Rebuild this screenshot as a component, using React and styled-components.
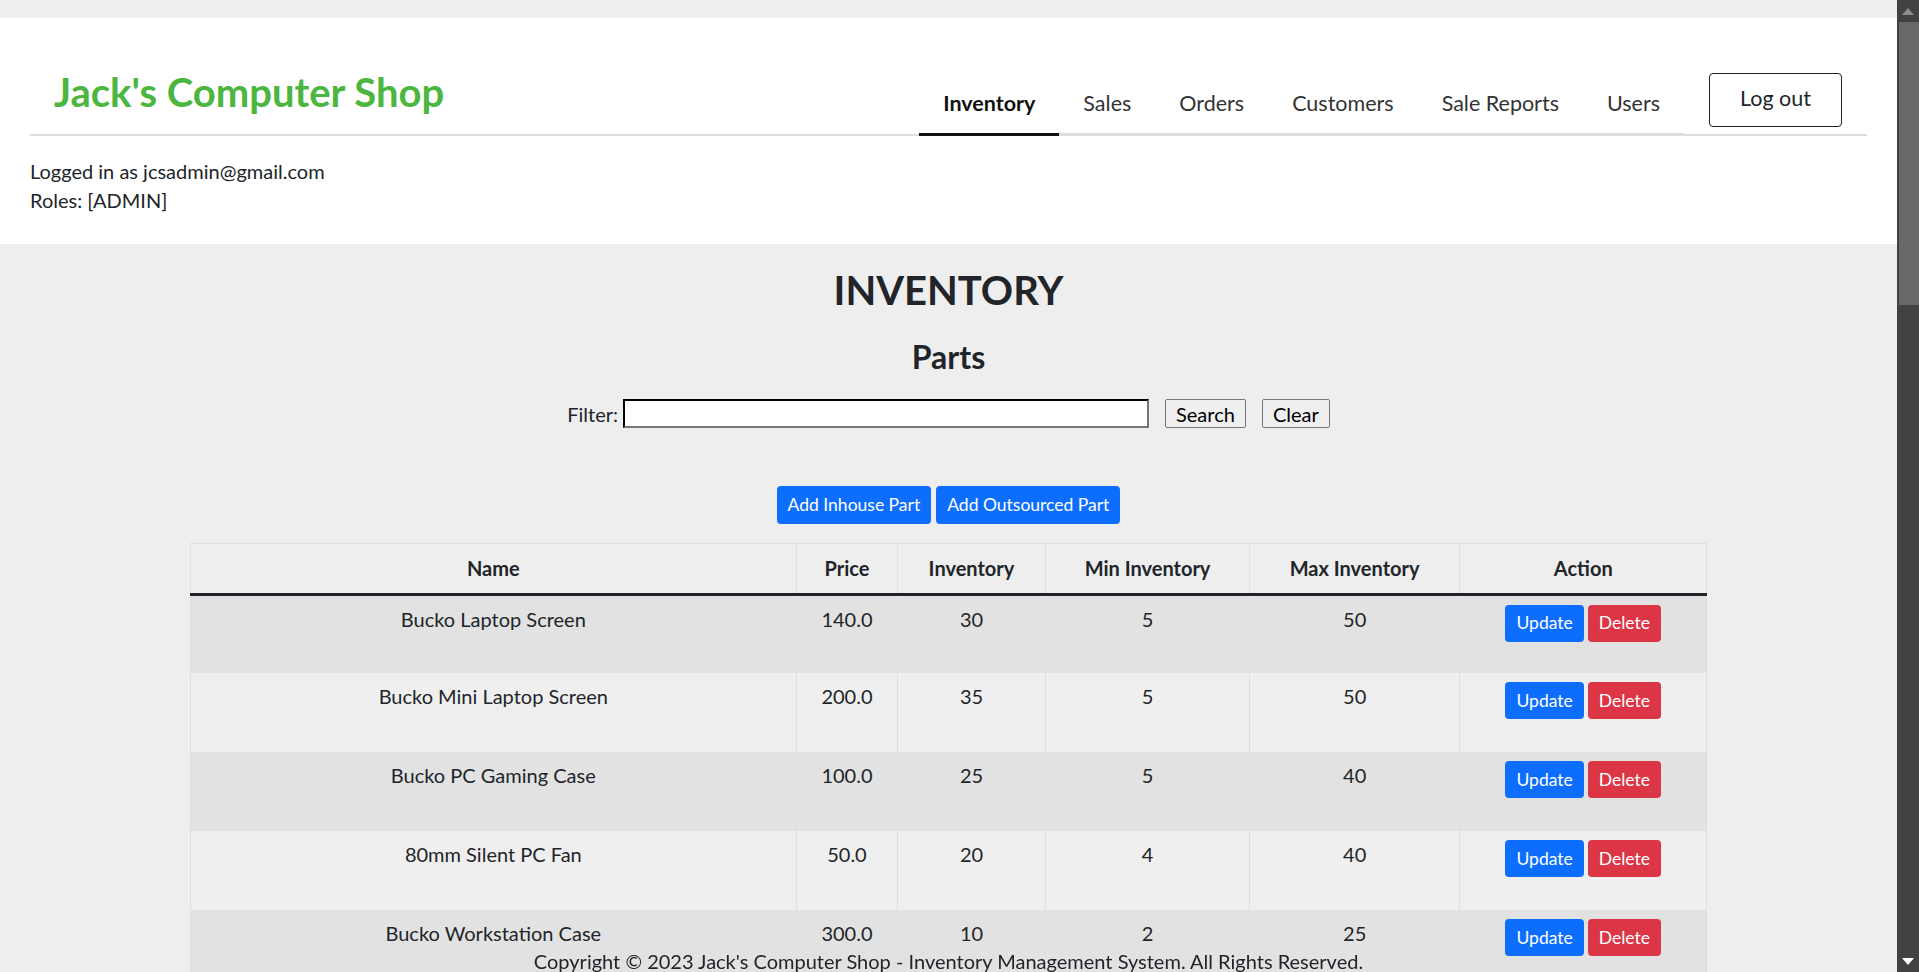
import React from "react";
import styled, { createGlobalStyle } from "styled-components";

const GlobalStyle = createGlobalStyle`
  html { background: #eeeeee; }
  body {
    margin: 0;
    padding-right: 22px;
    background: #eeeeee;
    font-family: Lato, "Open Sans", "Liberation Sans", sans-serif;
    font-size: 20px;
    line-height: 1.5;
    color: #212529;
  }
  * { box-sizing: border-box; }
`;

const Page = styled.div`
  padding-top: 18px;
  padding-bottom: 120px;
`;

const Header = styled.header`
  background: #ffffff;
`;

const HeaderBar = styled.div`
  display: flex;
  align-items: flex-end;
  margin: 0 30px;
  padding-top: 50px;
  border-bottom: 2px solid #dedede;
`;

const Brand = styled.h1`
  margin: 0 auto 18px 0;
  padding-left: 24px;
  font-size: 40px;
  line-height: 48px;
  font-weight: 700;
  color: #4cb640;
`;

const NavList = styled.ul`
  display: flex;
  list-style: none;
  margin: 0 0 -2px 0;
  padding: 0;
  border-bottom: 3px solid #dedede;
`;

const NavItem = styled.li`
  margin-bottom: -3px;
  padding: 9px 24px 14px;
  font-size: 21.5px;
  line-height: 32px;
  color: ${(p) => (p.$active ? "#111111" : "#333333")};
  font-weight: ${(p) => (p.$active ? 700 : 400)};
  border-bottom: 3px solid ${(p) => (p.$active ? "#111111" : "transparent")};
  cursor: pointer;
`;

const LogoutButton = styled.button`
  width: 133px;
  height: 54px;
  margin: 0 25px 7px 25px;
  background: #ffffff;
  border: 1.5px solid #222222;
  border-radius: 4px;
  font-family: inherit;
  font-size: 21.5px;
  color: #212529;
  padding: 0 0 5px;
`;

const UserInfo = styled.div`
  padding: 21px 30px 29px;
  font-size: 20px;
  line-height: 28.8px;
`;

const Main = styled.main`
  display: flex;
  flex-direction: column;
  align-items: center;
`;

const Title = styled.h1`
  margin: 22px 0 0;
  font-size: 40px;
  line-height: 48px;
  font-weight: 700;
`;

const SubTitle = styled.h2`
  margin: ${(p) => p.$mt || 24}px 0 0;
  font-size: 32px;
  line-height: 38px;
  font-weight: 700;
`;

const FilterRow = styled.form`
  display: flex;
  align-items: center;
  margin-top: 23px;
  font-size: 20px;
`;

const FilterLabel = styled.label`
  margin-right: 5px;
`;

const FilterInput = styled.input`
  width: 526px;
  height: 29px;
  border: 2px inset #767676;
  border-top-color: #222;
  border-left-color: #222;
  background: #ffffff;
  margin-right: 16px;
`;

const PlainButton = styled.button`
  height: 29px;
  padding: 0 10px;
  margin-right: 16px;
  background: #efefef;
  border: 1px solid #767676;
  border-radius: 2px;
  font-family: inherit;
  font-size: 20px;
  line-height: 24px;
  color: #000;
  &:last-child { margin-right: 0; }
`;

const ActionsRow = styled.div`
  display: flex;
  gap: 5px;
  margin-top: 57px;
`;

const Btn = styled.button`
  height: ${(p) => (p.$small ? 37 : 38)}px;
  padding: 0 11px;
  border: none;
  border-radius: 4px;
  background: ${(p) => (p.$variant === "danger" ? "#dc3545" : "#0d6efd")};
  color: #ffffff;
  font-family: inherit;
  font-size: 17.5px;
  line-height: 24px;
`;

const Table = styled.table`
  width: 80%;
  margin-top: 19px;
  border-collapse: collapse;
  font-size: 20px;
`;

const Th = styled.th`
  width: ${(p) => p.$w}px;
  height: 51px;
  padding: 10px 8px;
  font-weight: 700;
  line-height: 28.8px;
  text-align: center;
  border: 1px solid #dfdfdf;
  border-bottom: 3px solid #212529;
`;

const Tr = styled.tr`
  background: ${(p) => (p.$odd ? "#e2e2e2" : "#efefef")};
`;

const Td = styled.td`
  height: 79px;
  padding: 9px 8px 10px;
  vertical-align: top;
  text-align: center;
  line-height: 28.8px;
  border-left: 1px solid #dfdfdf;
  border-right: 1px solid #dfdfdf;
`;

const ButtonCell = styled.div`
  display: flex;
  justify-content: center;
  gap: 4px;
`;

const Footer = styled.footer`
  position: fixed;
  left: 0;
  right: 22px;
  bottom: 0;
  text-align: center;
  font-size: 20px;
  line-height: 22px;
`;

/* browser-style vertical scrollbar shown at the right edge of the window */
const ScrollRail = styled.div`
  position: fixed;
  top: 0;
  right: 0;
  width: 22px;
  height: 100vh;
  background: #424242;
  display: flex;
  flex-direction: column;
`;

const ScrollArrow = styled.div`
  height: 22px;
  flex: none;
  display: flex;
  align-items: center;
  justify-content: center;
  margin-top: ${(p) => (p.$bottom ? "auto" : 0)};
`;

const ScrollThumb = styled.div`
  height: 283px;
  margin-left: 2px;
  background: #686868;
  flex: none;
`;

const parts = [
  ["Bucko Laptop Screen", "140.0", 30, 5, 50],
  ["Bucko Mini Laptop Screen", "200.0", 35, 5, 50],
  ["Bucko PC Gaming Case", "100.0", 25, 5, 40],
  ["80mm Silent PC Fan", "50.0", 20, 4, 40],
  ["Bucko Workstation Case", "300.0", 10, 2, 25],
  ["Bucko 650W Power Supply", "90.0", 15, 3, 30],
  ["Bucko DDR4 16GB RAM", "75.0", 40, 5, 60],
  ["Bucko 1TB NVMe SSD", "120.0", 22, 4, 40],
  ["Bucko ATX Motherboard", "180.0", 12, 2, 25],
  ["120mm RGB PC Fan", "25.0", 45, 5, 60],
  ["Bucko Thermal Paste", "10.0", 50, 10, 80],
  ["Bucko CPU Cooler", "60.0", 18, 3, 30],
];

const products = [
  ["Bucko Gaming Laptop", "1200.0", 8],
  ["Bucko Ultrabook", "950.0", 10],
  ["Bucko Gaming PC", "1500.0", 5],
  ["Bucko Workstation", "2200.0", 4],
  ["Bucko Mini PC", "450.0", 12],
  ["Bucko Office PC", "650.0", 9],
  ["Bucko Streaming PC", "1800.0", 3],
  ["Bucko Home Server", "1100.0", 6],
];

const partCols = [
  ["Name", 606],
  ["Price", 101],
  ["Inventory", 148],
  ["Min Inventory", 204],
  ["Max Inventory", 210],
  ["Action", 247],
];

const productCols = [
  ["Name", 706],
  ["Price", 201],
  ["Inventory", 248],
  ["Action", 361],
];

const navItems = ["Inventory", "Sales", "Orders", "Customers", "Sale Reports", "Users"];

function Actions() {
  return (
    <ButtonCell>
      <Btn $small>Update</Btn>
      <Btn $small $variant="danger">Delete</Btn>
    </ButtonCell>
  );
}

function Filter() {
  return (
    <FilterRow onSubmit={(e) => e.preventDefault()}>
      <FilterLabel>Filter:</FilterLabel>
      <FilterInput type="text" />
      <PlainButton type="submit">Search</PlainButton>
      <PlainButton type="button">Clear</PlainButton>
    </FilterRow>
  );
}

function Scrollbar() {
  return (
    <ScrollRail aria-hidden="true">
      <ScrollArrow>
        <svg width="12" height="7" viewBox="0 0 12 7">
          <polygon points="0,7 12,7 6,0" fill="#8c8c8c" />
        </svg>
      </ScrollArrow>
      <ScrollThumb />
      <ScrollArrow $bottom>
        <svg width="12" height="7" viewBox="0 0 12 7">
          <polygon points="0,0 12,0 6,7" fill="#ffffff" />
        </svg>
      </ScrollArrow>
    </ScrollRail>
  );
}

export default function App() {
  return (
    <>
      <GlobalStyle />
      <Page>
        <Header>
          <HeaderBar>
            <Brand>Jack's Computer Shop</Brand>
            <NavList>
              {navItems.map((n, i) => (
                <NavItem key={n} $active={i === 0}>
                  {n}
                </NavItem>
              ))}
            </NavList>
            <LogoutButton>Log out</LogoutButton>
          </HeaderBar>
          <UserInfo>
            <div>Logged in as jcsadmin@gmail.com</div>
            <div>Roles: [ADMIN]</div>
          </UserInfo>
        </Header>
        <Main>
          <Title>INVENTORY</Title>
          <SubTitle>Parts</SubTitle>
          <Filter />
          <ActionsRow>
            <Btn>Add Inhouse Part</Btn>
            <Btn>Add Outsourced Part</Btn>
          </ActionsRow>
          <Table>
            <thead>
              <tr>
                {partCols.map(([c, w]) => (
                  <Th key={c} $w={w}>
                    {c}
                  </Th>
                ))}
              </tr>
            </thead>
            <tbody>
              {parts.map((p, i) => (
                <Tr key={p[0]} $odd={i % 2 === 0}>
                  <Td>{p[0]}</Td>
                  <Td>{p[1]}</Td>
                  <Td>{p[2]}</Td>
                  <Td>{p[3]}</Td>
                  <Td>{p[4]}</Td>
                  <Td>
                    <Actions />
                  </Td>
                </Tr>
              ))}
            </tbody>
          </Table>
          <SubTitle $mt={48}>Products</SubTitle>
          <Filter />
          <ActionsRow>
            <Btn>Add Product</Btn>
          </ActionsRow>
          <Table>
            <thead>
              <tr>
                {productCols.map(([c, w]) => (
                  <Th key={c} $w={w}>
                    {c}
                  </Th>
                ))}
              </tr>
            </thead>
            <tbody>
              {products.map((p, i) => (
                <Tr key={p[0]} $odd={i % 2 === 0}>
                  <Td>{p[0]}</Td>
                  <Td>{p[1]}</Td>
                  <Td>{p[2]}</Td>
                  <Td>
                    <Actions />
                  </Td>
                </Tr>
              ))}
            </tbody>
          </Table>
        </Main>
        <Footer>
          Copyright © 2023 Jack's Computer Shop - Inventory Management System. All Rights Reserved.
        </Footer>
      </Page>
      <Scrollbar />
    </>
  );
}
